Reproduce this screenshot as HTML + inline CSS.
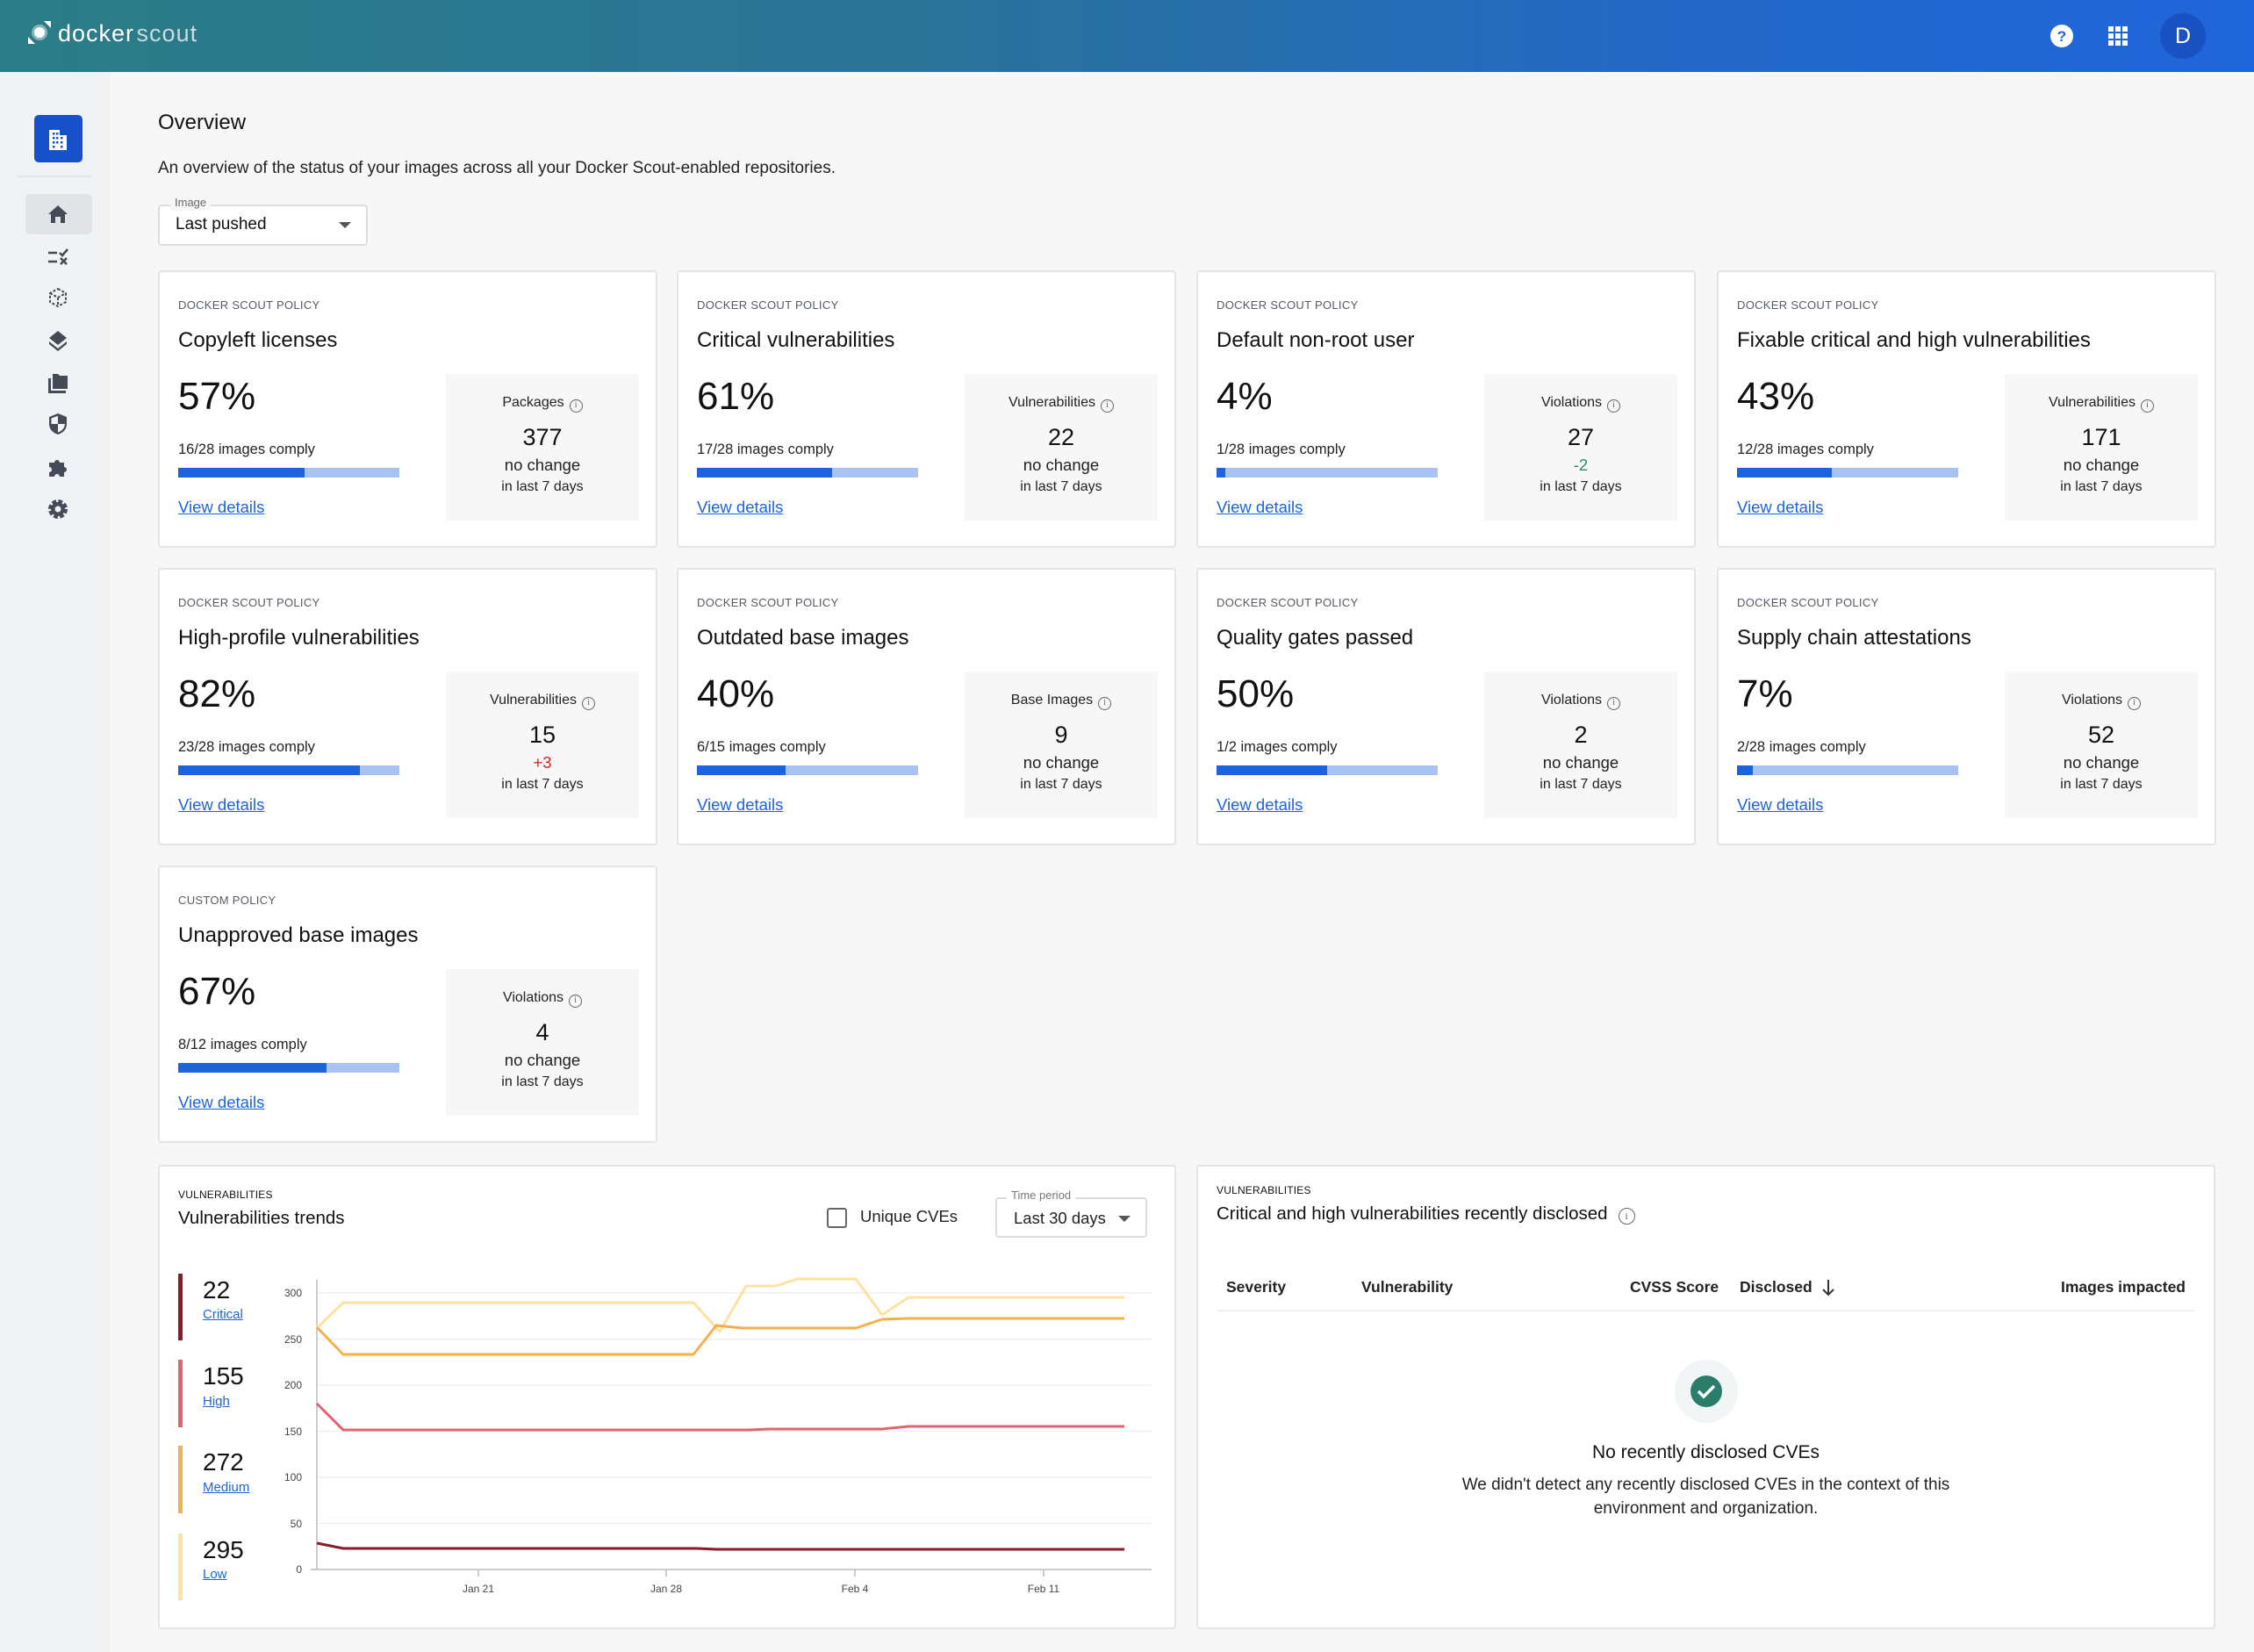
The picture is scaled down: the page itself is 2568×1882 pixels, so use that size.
<!DOCTYPE html>
<html><head><meta charset="utf-8"><style>
*{margin:0;padding:0;box-sizing:border-box}
body{width:2568px;height:1882px;position:relative;background:#f7f7f8;font-family:"Liberation Sans",Arial,sans-serif;color:#111;overflow:hidden}
.a{position:absolute;white-space:nowrap}
.hdr{position:absolute;left:0;top:0;width:2568px;height:82px;background:linear-gradient(90deg,#2b7c86 0%,#2a7498 40%,#2468c8 75%,#1f66dc 100%)}
.side{position:absolute;left:0;top:82px;width:125px;height:1800px;background:#f1f2f4}
.card{position:absolute;width:569px;height:316px;background:#fff;border:2px solid #e3e4e6;border-radius:4px}
.card .lb{position:absolute;left:21px;top:30px;font-size:13px;line-height:16px;color:#555a63;letter-spacing:.3px}
.card .tt{position:absolute;left:21px;top:63px;font-size:24px;line-height:30px;color:#111}
.card .pc{position:absolute;left:21px;top:117px;font-size:44px;line-height:50px;color:#111}
.card .cm{position:absolute;left:21px;top:191px;font-size:16.5px;line-height:22px;color:#222}
.card .bar{position:absolute;left:21px;top:223px;width:252px;height:11px;background:#a8c2f2}
.card .bar i{display:block;height:11px;background:#1d63e0}
.card .vd{position:absolute;left:21px;top:256px;font-size:18.5px;line-height:24px;color:#1d63e0;text-decoration:underline}
.card .sb{position:absolute;left:326px;top:116px;width:220px;height:167px;background:#f7f7f8;text-align:center}
.sb .s1{position:absolute;left:0;right:0;top:22px;font-size:16px;line-height:22px;color:#222}
.sb .s2{position:absolute;left:0;right:0;top:55px;font-size:27px;line-height:34px;color:#111}
.sb .s3{position:absolute;left:0;right:0;top:92px;font-size:18.5px;line-height:24px;color:#222}
.sb .s4{position:absolute;left:0;right:0;top:118px;font-size:16px;line-height:22px;color:#222}
.inf{display:inline-block;width:15px;height:15px;border:1.5px solid #666;border-radius:50%;font-size:10px;line-height:12px;color:#666;vertical-align:-1px;margin-left:6px;font-family:"Liberation Serif",serif;text-align:center}
.panel{position:absolute;background:#fff;border:2px solid #e3e4e6;border-radius:4px}
.ic{position:absolute;left:52px;width:28px;height:28px}
</style></head><body>
<div class="hdr"></div>
<svg class="a" style="left:30px;top:22px" width="30" height="30" viewBox="0 0 30 30"><circle cx="15" cy="15" r="9" fill="#cfe6ea" opacity=".55"/><circle cx="15" cy="15" r="6" fill="#fff"/><path d="M20 2 L28 2 L28 10 Z" fill="#fff"/><path d="M2 28 L2 20 L10 28 Z" fill="#fff"/></svg>
<div class="a" style="left:66px;top:21px;font-size:27px;line-height:34px;color:#fff;letter-spacing:1px">docker <span style="color:#c9dbe3;margin-left:-6px">scout</span></div>
<svg class="a" style="left:2335px;top:27px" width="28" height="28" viewBox="0 0 28 28"><circle cx="14" cy="14" r="13" fill="#fff"/><text x="14" y="20" text-anchor="middle" font-size="17" font-weight="bold" fill="#1f66d6" font-family="Liberation Sans">?</text></svg>
<svg class="a" style="left:2401px;top:29px" width="24" height="24" viewBox="0 0 24 24" fill="#fff"><rect x="1" y="1" width="6" height="6"/><rect x="9" y="1" width="6" height="6"/><rect x="17" y="1" width="6" height="6"/><rect x="1" y="9" width="6" height="6"/><rect x="9" y="9" width="6" height="6"/><rect x="17" y="9" width="6" height="6"/><rect x="1" y="17" width="6" height="6"/><rect x="9" y="17" width="6" height="6"/><rect x="17" y="17" width="6" height="6"/></svg>
<div class="a" style="left:2461px;top:15px;width:52px;height:52px;border-radius:50%;background:#1a52c4;color:#fff;font-size:25px;line-height:52px;text-align:center">D</div>

<div class="side"></div>
<div class="a" style="left:39px;top:131px;width:55px;height:54px;background:#1751c9;border-radius:5px"></div>
<svg class="a" style="left:54px;top:144px" width="25" height="28" viewBox="0 0 25 28" fill="#fff"><path d="M4 4h10v6h8v17H2V4z"/><g fill="#1751c9"><rect x="6" y="7" width="2.5" height="2.5"/><rect x="10" y="7" width="2.5" height="2.5"/><rect x="6" y="12" width="2.5" height="2.5"/><rect x="10" y="12" width="2.5" height="2.5"/><rect x="15" y="12" width="2.5" height="2.5"/><rect x="6" y="17" width="2.5" height="2.5"/><rect x="10" y="17" width="2.5" height="2.5"/><rect x="15" y="17" width="2.5" height="2.5"/><rect x="6" y="22" width="2.5" height="2.5"/><rect x="15" y="22" width="2.5" height="2.5"/></g></svg>
<div class="a" style="left:19px;top:200px;width:86px;height:2px;background:#e6e7ea"></div>
<div class="a" style="left:29px;top:221px;width:76px;height:46px;background:#e2e3e6;border-radius:6px"></div>
<svg class="ic" style="top:230px" viewBox="0 0 28 28" fill="#444b57"><path d="M14 4 L25 14 L22 14 L22 24 L17 24 L17 17 L11 17 L11 24 L6 24 L6 14 L3 14 Z"/></svg>
<svg class="ic" style="top:278px" viewBox="0 0 28 28" fill="none" stroke="#444b57" stroke-width="2.6"><path d="M3 10h10M3 20h10M16 10l3 3 6-7M17 16l7 7M24 16l-7 7"/></svg>
<svg class="ic" style="top:325px" viewBox="0 0 28 28" fill="none" stroke="#444b57" stroke-width="2" stroke-dasharray="3 2"><path d="M14 4l9 5v10l-9 5-9-5V9z M5 9l9 5 9-5 M14 14v10"/></svg>
<svg class="ic" style="top:374px" viewBox="0 0 28 28" fill="#444b57"><path d="M14 3l10 8-10 8-10-8z"/><path d="M4 15l10 8 10-8 0 3-10 8-10-8z"/></svg>
<svg class="ic" style="top:422px" viewBox="0 0 28 28" fill="#444b57"><path d="M8 4h6l2 2h9v15H8z"/><path d="M3 9h3v14h17v3H3z"/></svg>
<svg class="ic" style="top:469px" viewBox="0 0 28 28"><path d="M14 2l10 4v8c0 6-4 10-10 12C8 24 4 20 4 14V6z" fill="#444b57"/><path d="M14 14h8c-.5 5-3.5 8-8 9.5z M14 14H6.5V7.5L14 4.8z" fill="#f1f2f4"/></svg>
<svg class="ic" style="top:518px" viewBox="0 0 28 28" fill="#444b57"><path d="M4 9h6a3 3 0 1 1 6 0h5v5a3 3 0 1 1 0 6v5h-5a3 3 0 1 0-6 0H4v-5a3 3 0 1 0 0-6z"/></svg>
<svg class="ic" style="top:566px" viewBox="0 0 28 28"><circle cx="14" cy="14" r="8" fill="none" stroke="#444b57" stroke-width="6" stroke-dasharray="4.2 2.1"/><circle cx="14" cy="14" r="8" fill="#444b57"/><circle cx="14" cy="14" r="3.5" fill="#f1f2f4"/></svg>

<div class="a" style="left:180px;top:125px;font-size:24px;line-height:30px">Overview</div>
<div class="a" style="left:180px;top:180px;font-size:19px;line-height:24px;color:#222">An overview of the status of your images across all your Docker Scout-enabled repositories.</div>
<div class="a" style="left:180px;top:233px;width:239px;height:47px;background:#fff;border:2px solid #dcdde0;border-radius:4px"></div>
<div class="a" style="left:194px;top:222px;padding:0 5px;background:#f7f7f8;font-size:13px;line-height:18px;color:#666">Image</div>
<div class="a" style="left:200px;top:244px;font-size:19px;line-height:24px">Last pushed</div>
<div class="a" style="left:386px;top:253px;width:0;height:0;border-left:7px solid transparent;border-right:7px solid transparent;border-top:7px solid #555"></div>

<!-- cards -->
<div class="card" style="left:180px;top:308px"><div class="lb">DOCKER SCOUT POLICY</div><div class="tt">Copyleft licenses</div><div class="pc">57%</div><div class="cm">16/28 images comply</div><div class="bar"><i style="width:57%"></i></div><div class="vd">View details</div><div class="sb"><div class="s1">Packages<span class="inf">i</span></div><div class="s2">377</div><div class="s3">no change</div><div class="s4">in last 7 days</div></div></div>
<div class="card" style="left:771px;top:308px"><div class="lb">DOCKER SCOUT POLICY</div><div class="tt">Critical vulnerabilities</div><div class="pc">61%</div><div class="cm">17/28 images comply</div><div class="bar"><i style="width:61%"></i></div><div class="vd">View details</div><div class="sb"><div class="s1">Vulnerabilities<span class="inf">i</span></div><div class="s2">22</div><div class="s3">no change</div><div class="s4">in last 7 days</div></div></div>
<div class="card" style="left:1363px;top:308px"><div class="lb">DOCKER SCOUT POLICY</div><div class="tt">Default non-root user</div><div class="pc">4%</div><div class="cm">1/28 images comply</div><div class="bar"><i style="width:4%"></i></div><div class="vd">View details</div><div class="sb"><div class="s1">Violations<span class="inf">i</span></div><div class="s2">27</div><div class="s3" style="color:#2e8a6a">-2</div><div class="s4">in last 7 days</div></div></div>
<div class="card" style="left:1956px;top:308px"><div class="lb">DOCKER SCOUT POLICY</div><div class="tt">Fixable critical and high vulnerabilities</div><div class="pc">43%</div><div class="cm">12/28 images comply</div><div class="bar"><i style="width:43%"></i></div><div class="vd">View details</div><div class="sb"><div class="s1">Vulnerabilities<span class="inf">i</span></div><div class="s2">171</div><div class="s3">no change</div><div class="s4">in last 7 days</div></div></div>

<div class="card" style="left:180px;top:647px"><div class="lb">DOCKER SCOUT POLICY</div><div class="tt">High-profile vulnerabilities</div><div class="pc">82%</div><div class="cm">23/28 images comply</div><div class="bar"><i style="width:82%"></i></div><div class="vd">View details</div><div class="sb"><div class="s1">Vulnerabilities<span class="inf">i</span></div><div class="s2">15</div><div class="s3" style="color:#d0262e">+3</div><div class="s4">in last 7 days</div></div></div>
<div class="card" style="left:771px;top:647px"><div class="lb">DOCKER SCOUT POLICY</div><div class="tt">Outdated base images</div><div class="pc">40%</div><div class="cm">6/15 images comply</div><div class="bar"><i style="width:40%"></i></div><div class="vd">View details</div><div class="sb"><div class="s1">Base Images<span class="inf">i</span></div><div class="s2">9</div><div class="s3">no change</div><div class="s4">in last 7 days</div></div></div>
<div class="card" style="left:1363px;top:647px"><div class="lb">DOCKER SCOUT POLICY</div><div class="tt">Quality gates passed</div><div class="pc">50%</div><div class="cm">1/2 images comply</div><div class="bar"><i style="width:50%"></i></div><div class="vd">View details</div><div class="sb"><div class="s1">Violations<span class="inf">i</span></div><div class="s2">2</div><div class="s3">no change</div><div class="s4">in last 7 days</div></div></div>
<div class="card" style="left:1956px;top:647px"><div class="lb">DOCKER SCOUT POLICY</div><div class="tt">Supply chain attestations</div><div class="pc">7%</div><div class="cm">2/28 images comply</div><div class="bar"><i style="width:7%"></i></div><div class="vd">View details</div><div class="sb"><div class="s1">Violations<span class="inf">i</span></div><div class="s2">52</div><div class="s3">no change</div><div class="s4">in last 7 days</div></div></div>

<div class="card" style="left:180px;top:986px"><div class="lb">CUSTOM POLICY</div><div class="tt">Unapproved base images</div><div class="pc">67%</div><div class="cm">8/12 images comply</div><div class="bar"><i style="width:67%"></i></div><div class="vd">View details</div><div class="sb"><div class="s1">Violations<span class="inf">i</span></div><div class="s2">4</div><div class="s3">no change</div><div class="s4">in last 7 days</div></div></div>

<!-- trends panel -->
<div class="panel" style="left:180px;top:1327px;width:1160px;height:529px"></div>
<div class="a" style="left:203px;top:1353px;font-size:12px;line-height:16px;color:#111;letter-spacing:.2px">VULNERABILITIES</div>
<div class="a" style="left:203px;top:1375px;font-size:20.5px;line-height:26px">Vulnerabilities trends</div>
<div class="a" style="left:942px;top:1376px;width:23px;height:23px;border:2px solid #666;border-radius:3px"></div>
<div class="a" style="left:980px;top:1374px;font-size:18.5px;line-height:24px;color:#222">Unique CVEs</div>
<div class="a" style="left:1134px;top:1364px;width:173px;height:46px;border:2px solid #dcdde0;border-radius:4px;background:#fff"></div>
<div class="a" style="left:1147px;top:1353px;padding:0 5px;background:#fff;font-size:13px;line-height:17px;color:#777">Time period</div>
<div class="a" style="left:1155px;top:1376px;font-size:18.5px;line-height:24px;color:#222">Last 30 days</div>
<div class="a" style="left:1274px;top:1385px;width:0;height:0;border-left:7px solid transparent;border-right:7px solid transparent;border-top:7px solid #555"></div>

<div class="a" style="left:203px;top:1451px;width:5px;height:76px;background:#8b1a2b"></div>
<div class="a" style="left:203px;top:1549px;width:5px;height:77px;background:#e06470"></div>
<div class="a" style="left:203px;top:1647px;width:5px;height:77px;background:#f5b04e"></div>
<div class="a" style="left:203px;top:1747px;width:5px;height:76px;background:#fde2a0"></div>
<div class="a" style="left:231px;top:1453px;font-size:28px;line-height:34px">22</div>
<div class="a" style="left:231px;top:1488px;font-size:15px;line-height:20px;color:#1d63e0;text-decoration:underline">Critical</div>
<div class="a" style="left:231px;top:1551px;font-size:28px;line-height:34px">155</div>
<div class="a" style="left:231px;top:1587px;font-size:15px;line-height:20px;color:#1d63e0;text-decoration:underline">High</div>
<div class="a" style="left:231px;top:1649px;font-size:28px;line-height:34px">272</div>
<div class="a" style="left:231px;top:1685px;font-size:15px;line-height:20px;color:#1d63e0;text-decoration:underline">Medium</div>
<div class="a" style="left:231px;top:1749px;font-size:28px;line-height:34px">295</div>
<div class="a" style="left:231px;top:1784px;font-size:15px;line-height:20px;color:#1d63e0;text-decoration:underline">Low</div>

<svg class="a" style="left:180px;top:1327px" width="1160" height="529" viewBox="180 1327 1160 529">
<g stroke="#eeeff1" stroke-width="1.5"><line x1="361" x2="1312" y1="1473" y2="1473"/><line x1="361" x2="1312" y1="1525.5" y2="1525.5"/><line x1="361" x2="1312" y1="1578" y2="1578"/><line x1="361" x2="1312" y1="1630.5" y2="1630.5"/><line x1="361" x2="1312" y1="1683" y2="1683"/><line x1="361" x2="1312" y1="1735.5" y2="1735.5"/></g>
<g stroke="#bbb" stroke-width="1.5"><line x1="361" x2="361" y1="1458" y2="1788"/><line x1="354" x2="1312" y1="1788" y2="1788"/><line x1="545" x2="545" y1="1788" y2="1796"/><line x1="759" x2="759" y1="1788" y2="1796"/><line x1="974" x2="974" y1="1788" y2="1796"/><line x1="1189" x2="1189" y1="1788" y2="1796"/></g>
<g font-family="Liberation Sans" font-size="12" fill="#444" text-anchor="end"><text x="344" y="1477">300</text><text x="344" y="1530">250</text><text x="344" y="1582">200</text><text x="344" y="1635">150</text><text x="344" y="1687">100</text><text x="344" y="1740">50</text><text x="344" y="1792">0</text></g>
<g font-family="Liberation Sans" font-size="12" fill="#444" text-anchor="middle"><text x="545" y="1814">Jan 21</text><text x="759" y="1814">Jan 28</text><text x="974" y="1814">Feb 4</text><text x="1189" y="1814">Feb 11</text></g>
<g fill="none" stroke-width="3" stroke-linejoin="round">
<polyline stroke="#fde2a0" points="361,1513 391,1484 790,1484 820,1517 850,1465 883,1465 909,1457 975,1457 1005,1498 1035,1478 1281,1478"/>
<polyline stroke="#f5b04e" points="361,1512 391,1543 790,1543 816,1510 846,1513 975,1513 1005,1503 1035,1502 1281,1502"/>
<polyline stroke="#e06470" points="361,1599 391,1629 853,1629 876,1628 1005,1628 1035,1625 1281,1625"/>
<polyline stroke="#8b1a2b" points="361,1758 391,1764 794,1764 816,1765 1281,1765"/>
</g></svg>

<!-- recent CVEs panel -->
<div class="panel" style="left:1363px;top:1327px;width:1161px;height:529px"></div>
<div class="a" style="left:1386px;top:1348px;font-size:12px;line-height:16px;letter-spacing:.2px">VULNERABILITIES</div>
<div class="a" style="left:1386px;top:1370px;font-size:20.5px;line-height:26px">Critical and high vulnerabilities recently disclosed<span class="inf" style="width:19px;height:19px;font-size:12px;line-height:16px;margin-left:12px;vertical-align:0">i</span></div>
<div class="a" style="left:1397px;top:1455px;font-size:17.5px;line-height:22px;font-weight:bold;color:#222">Severity</div>
<div class="a" style="left:1551px;top:1455px;font-size:17.5px;line-height:22px;font-weight:bold;color:#222">Vulnerability</div>
<div class="a" style="left:1857px;top:1455px;font-size:17.5px;line-height:22px;font-weight:bold;color:#222">CVSS Score</div>
<div class="a" style="left:1982px;top:1455px;font-size:17.5px;line-height:22px;font-weight:bold;color:#222">Disclosed</div>
<svg class="a" style="left:2075px;top:1456px" width="16" height="22" viewBox="0 0 16 22" fill="none" stroke="#333" stroke-width="2"><path d="M8 2v17M2 13l6 6 6-6"/></svg>
<div class="a" style="left:2300px;width:190px;text-align:right;top:1455px;font-size:17.5px;line-height:22px;font-weight:bold;color:#222">Images impacted</div>
<div class="a" style="left:1387px;top:1492px;width:1113px;height:2px;background:#eeeff1"></div>
<div class="a" style="left:1908px;top:1549px;width:72px;height:72px;border-radius:50%;background:#f1f5f5"></div>
<svg class="a" style="left:1925px;top:1566px" width="38" height="38" viewBox="0 0 38 38"><circle cx="19" cy="19" r="18" fill="#2b7d6b"/><path d="M10 19l6 6 12-12" fill="none" stroke="#fff" stroke-width="3.5"/></svg>
<div class="a" style="left:1363px;width:1161px;text-align:center;top:1642px;font-size:21px;line-height:26px;color:#111">No recently disclosed CVEs</div>
<div class="a" style="left:1363px;width:1161px;text-align:center;top:1680px;font-size:19px;line-height:24px;color:#222">We didn't detect any recently disclosed CVEs in the context of this</div>
<div class="a" style="left:1363px;width:1161px;text-align:center;top:1707px;font-size:19px;line-height:24px;color:#222">environment and organization.</div>
</body></html>
